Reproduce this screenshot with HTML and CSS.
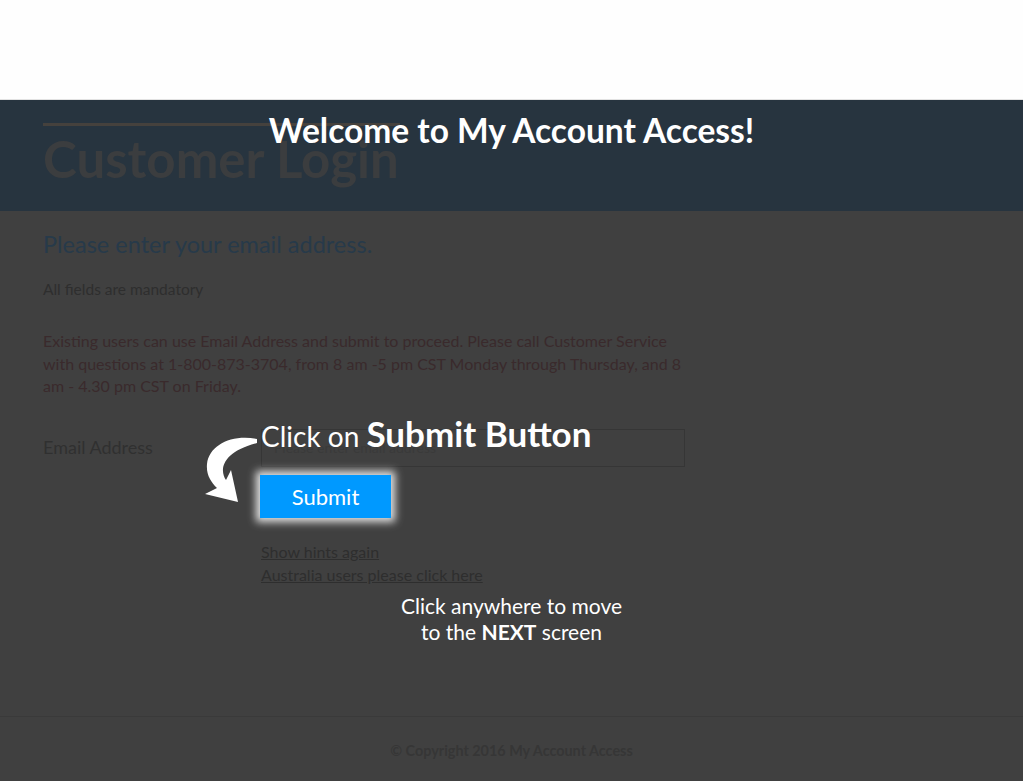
FILE: index.html
```html
<!DOCTYPE html>
<html lang="en">
<head>
    <meta charset="UTF-8">
    <meta name="viewport" content="width=device-width, initial-scale=1.0">
    <title>My Account Access - Customer Login</title>
    <link rel="stylesheet" href="styles.css">
</head>
<body>

    <!-- top bar (logo area, empty) -->
    <header class="site-header"></header>

    <main class="page">
        <!-- page title -->
        <section class="title-band">
            <div class="title-rule"></div>
            <h1>Customer Login</h1>
        </section>

        <!-- login form -->
        <section class="login">
            <h2>Please enter your email address.</h2>
            <p class="note">All fields are mandatory</p>
            <p class="info">Existing users can use Email Address and submit to proceed. Please call Customer Service with questions at 1-800-873-3704, from 8 am -5 pm CST Monday through Thursday, and 8 am - 4.30 pm CST on Friday.</p>

            <div class="form-row">
                <label for="email">Email Address</label>
                <div class="field-col">
                    <input type="email" id="email" placeholder="Please enter email address">
                    <button class="submit-button">Submit</button>

                    <div class="links">
                        <a href="#">Show hints again</a>
                        <a href="#">Australia users please click here</a>
                    </div>

                    <!-- hint over the form -->
                    <div class="hint-submit">
                        <svg class="hint-arrow" width="60" height="75" viewBox="200 430 60 75">
                            <path d="M257 437 C232 432 209 443 207 462 C206 473 211 480 217 486 L205 492 L238 500 L231 468 L226 478 C219 468 222 450 257 441 Z" fill="#fff"/>
                        </svg>
                        <span>Click on <b>Submit Button</b></span>
                    </div>
                </div>
            </div>
        </section>

        <footer class="site-footer">
            <p>© Copyright 2016 My Account Access</p>
        </footer>
    </main>

    <!-- hints overlay -->
    <div class="hint-welcome">Welcome to My Account Access!</div>
    <div class="hint-next">Click anywhere to move<br>to the <b>NEXT</b> screen</div>

</body>
</html>
```

FILE: styles.css
```css
body {
    margin: 0;
    font-family: Lato, "Open Sans", sans-serif;
    background-color: #404040;
    height: 100vh;
    overflow: hidden;
    display: flex;
    flex-direction: column;
    position: relative;
}

.site-header {
    height: 99px;
    background-color: #fefefe;
    border-bottom: 1px solid #e2e2e2;
}

.page {
    flex: 1;
    display: flex;
    flex-direction: column;
}

.title-band {
    height: 111px;
    background-color: #27343f;
    padding: 23px 43px 0;
    box-sizing: border-box;
}

.title-rule {
    width: 357px;
    height: 3px;
    background-color: #45413d;
}

.title-band h1 {
    margin: 7px 0 0;
    font-size: 51px;
    line-height: 51px;
    font-weight: 700;
    color: #3b3d3f;
}

.login {
    padding: 0 43px;
}

.login h2 {
    margin: 19px 0 0;
    font-size: 23.5px;
    line-height: 28px;
    font-weight: 400;
    color: #273a4a;
}

.note {
    margin: 21px 0 0;
    font-size: 15.5px;
    line-height: 20px;
    color: #2e2e2e;
}

.info {
    width: 640px;
    margin: 31px 0 0;
    font-size: 16px;
    line-height: 22.5px;
    color: #3a2a2c;
}

.form-row {
    display: flex;
    margin-top: 31px;
}

.form-row label {
    width: 218px;
    padding-top: 7px;
    font-size: 18px;
    color: #303030;
}

.field-col {
    position: relative;
    display: flex;
    flex-direction: column;
    align-items: flex-start;
}

.field-col input {
    width: 424px;
    height: 38px;
    padding: 0 12px;
    box-sizing: border-box;
    border: 1px solid #363636;
    background: transparent;
    font-family: Lato, sans-serif;
    font-size: 14px;
}

.field-col input::placeholder {
    color: #3a3a3a;
}

.submit-button {
    margin: 8px 0 0 -1px;
    width: 131px;
    height: 43px;
    border: none;
    background-color: #0099ff;
    color: #fff;
    font-family: Lato, sans-serif;
    font-size: 22px;
    box-shadow: 0 0 8px 4px rgba(255, 255, 255, 0.85);
    position: relative;
    z-index: 2;
}

.links {
    margin-top: 22px;
    display: flex;
    flex-direction: column;
}

.links a {
    font-size: 16px;
    line-height: 23px;
    color: #2e2e2e;
}

.hint-submit {
    position: absolute;
    left: -61px;
    top: -17px;
    display: flex;
    align-items: flex-start;
    color: #fff;
    font-size: 28px;
}

.hint-submit span {
    white-space: nowrap;
    margin-left: 1px;
}

.hint-submit b {
    font-size: 35px;
}

.hint-arrow {
    margin-top: 20px;
}

.site-footer {
    margin-top: auto;
    height: 64px;
    border-top: 1px solid #3a3a3a;
    text-align: center;
}

.site-footer p {
    margin: 25px 0 0;
    font-size: 14.4px;
    font-weight: 700;
    color: #363636;
}

.hint-welcome {
    position: absolute;
    top: 110px;
    left: 0;
    right: 0;
    text-align: center;
    font-size: 33.5px;
    font-weight: 700;
    color: #fff;
}

.hint-next {
    position: absolute;
    top: 593px;
    left: 0;
    right: 0;
    text-align: center;
    font-size: 21px;
    line-height: 26px;
    color: #fff;
}
```
